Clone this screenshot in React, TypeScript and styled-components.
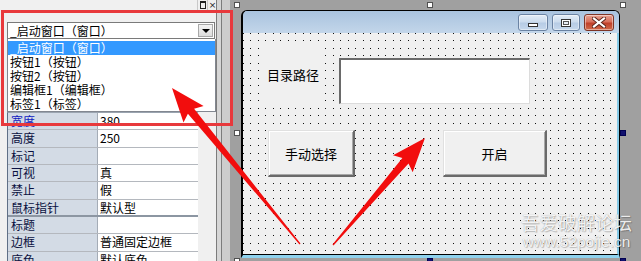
import React from 'react';
import styled, { createGlobalStyle } from 'styled-components';

const GlobalStyle = createGlobalStyle`
  html, body { margin: 0; padding: 0; background: #a0a0a0; }
  body { font-family: "Noto Sans CJK SC", "Liberation Sans", sans-serif; font-size: 12px; }
  #root { width: 641px; height: 261px; }
`;

const dots =
  "data:image/svg+xml;utf8,<svg xmlns='http://www.w3.org/2000/svg' width='15' height='15'>" +
  "<rect x='0' y='0' width='1' height='1' fill='%23101010'/><rect x='7' y='0' width='1' height='1' fill='%23101010'/>" +
  "<rect x='0' y='7' width='1' height='1' fill='%23101010'/><rect x='7' y='7' width='1' height='1' fill='%23101010'/></svg>";

const Page = styled.div`
  position: relative;
  display: flex;
  width: 641px;
  height: 261px;
  overflow: hidden;
  background: #a0a0a0;
`;

/* ---------- property inspector ---------- */

const Inspector = styled.div`
  width: 216px;
  height: 261px;
  overflow: hidden;
  padding-left: 7px;
  box-sizing: border-box;
  display: flex;
  flex-direction: column;
  background: #f0f0f0;
  flex-shrink: 0;
  & > * { flex-shrink: 0; }
`;

const PanelHeader = styled.div`
  height: 10px;
  display: flex;
  justify-content: flex-end;
  margin-right: -1px;
`;

const HeaderBtn = styled.div`
  width: 9px;
  height: 10px;
  border-left: 1px solid #c8c8c8;
  display: flex;
  align-items: center;
  justify-content: center;
  font-family: "DejaVu Sans", sans-serif;
  font-size: 9px;
  line-height: 1;
  color: #222;
`;

const PinGlyph = styled.div`
  width: 4px;
  height: 5px;
  border: 1px solid #222;
  border-top-width: 2px;
`;

const Combo = styled.div`
  margin-top: 12px;
  width: 208px;
  height: 17px;
  box-sizing: border-box;
  border: 1px solid #7a7a7a;
  background: #fff;
  display: flex;
  align-items: center;
  justify-content: space-between;
  padding-left: 2px;
  font-size: 12px;
  color: #000;
`;

const DropBtn = styled.div`
  width: 15px;
  height: 13px;
  margin-right: 1px;
  background: linear-gradient(#f4f4f4, #dcdcdc);
  border: 1px solid #a8a8a8;
  box-sizing: border-box;
  display: flex;
  align-items: center;
  justify-content: center;
`;

const DropArrow = styled.div`
  width: 0;
  height: 0;
  border-left: 4px solid transparent;
  border-right: 4px solid transparent;
  border-top: 4px solid #000;
`;

const List = styled.div`
  width: 209px;
  height: 73px;
  box-sizing: border-box;
  border: 1px solid #828790;
  border-top: none;
  background: #fff;
  padding: 2px 0 0 0;
  overflow: hidden;
`;

const ListItem = styled.div<{ $selected?: boolean }>`
  height: 14px;
  line-height: 14px;
  padding-left: 2px;
  font-size: 12px;
  white-space: nowrap;
  overflow: hidden;
  color: ${(p) => (p.$selected ? '#fff' : '#000')};
  background: ${(p) => (p.$selected ? '#3399ff' : 'transparent')};
`;

const Table = styled.div`
  width: 190px;
  border-left: 1px solid #5f6f86;
  border-top: 1px solid #9aa4b0;
  display: flex;
  flex-direction: column;
`;

const Row = styled.div<{ $thick?: boolean }>`
  display: flex;
  height: 17.33px;
  flex-shrink: 0;
  box-sizing: border-box;
  border-bottom: ${(p) => (p.$thick ? '2px solid #8c96a2' : '1px solid #b4b8be')};
  font-size: 12px;
  line-height: 16px;
  overflow: hidden;
`;

const LabelCell = styled.div<{ $active?: boolean }>`
  width: 90px;
  box-sizing: border-box;
  padding-left: 3px;
  background: #d3dbe5;
  border-right: 1px solid #a4acb6;
  color: ${(p) => (p.$active ? '#1020c0' : '#0a1040')};
  white-space: nowrap;
`;

const ValueCell = styled.div`
  flex: 1;
  padding-left: 2px;
  background: #fff;
  color: #000;
  white-space: nowrap;
`;

const Splitter = styled.div`
  width: 4px;
  flex-shrink: 0;
  border-left: 1px solid #7c7c7c;
  border-right: 1px solid #7c7c7c;
  background: #d6d6d6;
`;

const Gutter = styled.div`
  width: 8px;
  flex-shrink: 0;
  background: #cdcdcd;
`;

/* ---------- form designer ---------- */

const Designer = styled.div`
  flex: 1;
  padding: 10px 0 0 11px;
  background: #a0a0a0;
`;

const FormWindow = styled.div`
  width: 379px;
  height: 248px;
  box-sizing: border-box;
  display: flex;
  flex-direction: column;
  border-left: 2px solid #000;
  border-top: 1px solid #000;
  border-right: 1px solid #000;
  border-bottom: 3px solid #8ed2ee;
  border-radius: 6px 6px 0 0;
  overflow: hidden;
`;

const TitleBar = styled.div`
  height: 22px;
  flex-shrink: 0;
  display: flex;
  justify-content: flex-end;
  align-items: flex-start;
  gap: 4px;
  padding: 3px 5px 0 0;
  box-sizing: border-box;
  background: linear-gradient(#a9c3df, #c3d6ea);
`;

const CaptionBtn = styled.div<{ $close?: boolean; $w: number }>`
  width: ${(p) => p.$w}px;
  height: 17px;
  box-sizing: border-box;
  border-radius: 3px;
  border: 1px solid ${(p) => (p.$close ? '#7d3426' : '#6b83a3')};
  background: ${(p) =>
    p.$close
      ? 'linear-gradient(#e8a292 0%, #d8705c 45%, #c0402a 55%, #d06a4a 100%)'
      : 'linear-gradient(#e4edf7 0%, #ccdcee 45%, #b7cce5 55%, #c6d8ec 100%)'};
  box-shadow: inset 0 0 0 1px rgba(255, 255, 255, 0.45);
  display: flex;
  align-items: center;
  justify-content: center;
`;

const MinGlyph = styled.div`
  width: 10px;
  height: 4px;
  margin-top: 5px;
  box-sizing: border-box;
  border: 1px solid #333;
  background: #fff;
`;

const MaxGlyph = styled.div`
  width: 10px;
  height: 8px;
  box-sizing: border-box;
  border: 1px solid #333;
  background: #e8eef6;
  box-shadow: inset 0 0 0 1px #fff, inset 0 0 0 2px #555;
`;

const Client = styled.div`
  position: relative;
  flex: 1;
  background-color: #f0f0f0;
  background-image: url("${dots}");
  background-position: 0 0;
  border-right: 2px solid #86cbe8;
  border-bottom: 1px solid #000;
`;

type Box = { $x: number; $y: number; $w: number; $h: number };

const FormLabel = styled.div<Box>`
  position: absolute;
  left: ${(p) => p.$x}px;
  top: ${(p) => p.$y}px;
  width: ${(p) => p.$w}px;
  height: ${(p) => p.$h}px;
  background: #f0f0f0;
  display: flex;
  align-items: center;
  padding-left: 6px;
  box-sizing: border-box;
  font-size: 13px;
  color: #000;
`;

const EditBox = styled.div<Box>`
  position: absolute;
  left: ${(p) => p.$x}px;
  top: ${(p) => p.$y}px;
  width: ${(p) => p.$w}px;
  height: ${(p) => p.$h}px;
  box-sizing: border-box;
  background: #fff;
  border-top: 2px solid #6a6a6a;
  border-left: 2px solid #6a6a6a;
  border-right: 1px solid #dcdcdc;
  border-bottom: 1px solid #dcdcdc;
`;

const FormButton = styled.div<Box>`
  position: absolute;
  left: ${(p) => p.$x}px;
  top: ${(p) => p.$y}px;
  width: ${(p) => p.$w}px;
  height: ${(p) => p.$h}px;
  box-sizing: border-box;
  background: #f0f0f0;
  border-top: 1px solid #e0e0e0;
  border-left: 1px solid #e0e0e0;
  border-right: 2px solid #6a6a6a;
  border-bottom: 2px solid #6a6a6a;
  box-shadow: inset 1px 1px 0 #fff, inset -1px -1px 0 #a8a8a8;
  display: flex;
  align-items: center;
  justify-content: center;
  font-size: 13px;
  color: #000;
`;

/* ---------- overlays ---------- */

const Handle = styled.div<{ $x: number; $y: number; $filled?: boolean }>`
  position: absolute;
  left: ${(p) => p.$x}px;
  top: ${(p) => p.$y}px;
  width: 6px;
  height: 6px;
  box-sizing: border-box;
  border: 1px solid ${(p) => (p.$filled ? '#000050' : '#505050')};
  background: ${(p) => (p.$filled ? '#10106e' : '#fff')};
`;

const Callout = styled.div`
  position: absolute;
  left: 1px;
  top: 10px;
  width: 232px;
  height: 116px;
  box-sizing: border-box;
  border: 3px solid #e8393c;
  pointer-events: none;
`;

const ArrowLayer = styled.svg`
  position: absolute;
  left: 0;
  top: 0;
  pointer-events: none;
`;

const Watermark = styled.div`
  position: absolute;
  left: 521px;
  top: 211px;
  display: flex;
  flex-direction: column;
  align-items: center;
  color: rgba(255, 255, 255, 0.9);
  text-shadow: 0 0 1px rgba(0, 0, 0, 0.35), 1px 1px 1px rgba(0, 0, 0, 0.2);
  pointer-events: none;
`;

const WmTitle = styled.div`
  font-size: 18.5px;
  line-height: 23px;
`;

const WmUrl = styled.div`
  font-family: "Liberation Sans", sans-serif;
  font-size: 15.5px;
  line-height: 16px;
`;

function arrowPoints(x1: number, y1: number, x2: number, y2: number) {
  const head = 33;
  const headW = 26;
  const shaftW = 8;
  const dx = x2 - x1;
  const dy = y2 - y1;
  const L = Math.hypot(dx, dy);
  const ux = dx / L;
  const uy = dy / L;
  const px = -uy;
  const py = ux;
  const pt = (a: number, b: number) =>
    `${(x1 + ux * a + px * b).toFixed(1)},${(y1 + uy * a + py * b).toFixed(1)}`;
  return [
    pt(0, 0.6),
    pt(L - head + 3, shaftW / 2),
    pt(L - head - 1, headW / 2),
    pt(L, 0),
    pt(L - head - 1, -headW / 2),
    pt(L - head + 3, -shaftW / 2),
    pt(0, -0.6),
  ].join(' ');
}

const items = ['_启动窗口（窗口）', '按钮1（按钮）', '按钮2（按钮）', '编辑框1（编辑框）', '标签1（标签）'];

const props: [string, string][] = [
  ['宽度', '380'],
  ['高度', '250'],
  ['标记', ''],
  ['可视', '真'],
  ['禁止', '假'],
  ['鼠标指针', '默认型'],
  ['标题', ''],
  ['边框', '普通固定边框'],
  ['底色', '默认底色'],
];

const handles: [number, number, boolean][] = [
  [234, 2, false],
  [427, 2, false],
  [620, 2, false],
  [234, 130, false],
  [620, 130, true],
  [234, 258, false],
  [427, 258, true],
  [620, 258, true],
];

export default function App() {
  return (
    <>
      <GlobalStyle />
      <Page>
        <Inspector>
          <PanelHeader>
            <HeaderBtn>
              <PinGlyph />
            </HeaderBtn>
            <HeaderBtn>×</HeaderBtn>
          </PanelHeader>
          <Combo>
            <span>_启动窗口（窗口）</span>
            <DropBtn>
              <DropArrow />
            </DropBtn>
          </Combo>
          <List>
            {items.map((t, i) => (
              <ListItem key={t} $selected={i === 0}>
                {t}
              </ListItem>
            ))}
          </List>
          <Table>
            {props.map(([k, v], i) => (
              <Row key={k} $thick={i === 5}>
                <LabelCell $active={i === 0}>{k}</LabelCell>
                <ValueCell>{v}</ValueCell>
              </Row>
            ))}
          </Table>
        </Inspector>
        <Splitter />
        <Gutter />
        <Designer>
          <FormWindow>
            <TitleBar>
              <CaptionBtn $w={30}>
                <MinGlyph />
              </CaptionBtn>
              <CaptionBtn $w={28}>
                <MaxGlyph />
              </CaptionBtn>
              <CaptionBtn $w={30} $close>
                <svg width="14" height="11" viewBox="0 0 14 11">
                  <path d="M2 1.5 L12 9.5 M12 1.5 L2 9.5" stroke="#5a241a" strokeWidth="4" strokeLinecap="square" />
                  <path d="M2 1.5 L12 9.5 M12 1.5 L2 9.5" stroke="#fff" strokeWidth="2.2" strokeLinecap="square" />
                </svg>
              </CaptionBtn>
            </TitleBar>
            <Client>
              <FormLabel $x={18} $y={15} $w={60} $h={53}>
                目录路径
              </FormLabel>
              <EditBox $x={96} $y={25} $w={191} $h={46} />
              <FormButton $x={25} $y={97} $w={87} $h={47}>
                手动选择
              </FormButton>
              <FormButton $x={200} $y={97} $w={104} $h={47}>
                开启
              </FormButton>
            </Client>
          </FormWindow>
        </Designer>

        {handles.map(([x, y, f]) => (
          <Handle key={`${x}-${y}`} $x={x} $y={y} $filled={f} />
        ))}
        <Callout />
        <ArrowLayer width={641} height={261}>
          <polygon points={arrowPoints(300, 244, 172, 88)} fill="#f20d0d" />
          <polygon points={arrowPoints(333, 245, 425, 138)} fill="#f20d0d" />
        </ArrowLayer>
        <Watermark>
          <WmTitle>吾爱破解论坛</WmTitle>
          <WmUrl>www.52pojie.cn</WmUrl>
        </Watermark>
      </Page>
    </>
  );
}
